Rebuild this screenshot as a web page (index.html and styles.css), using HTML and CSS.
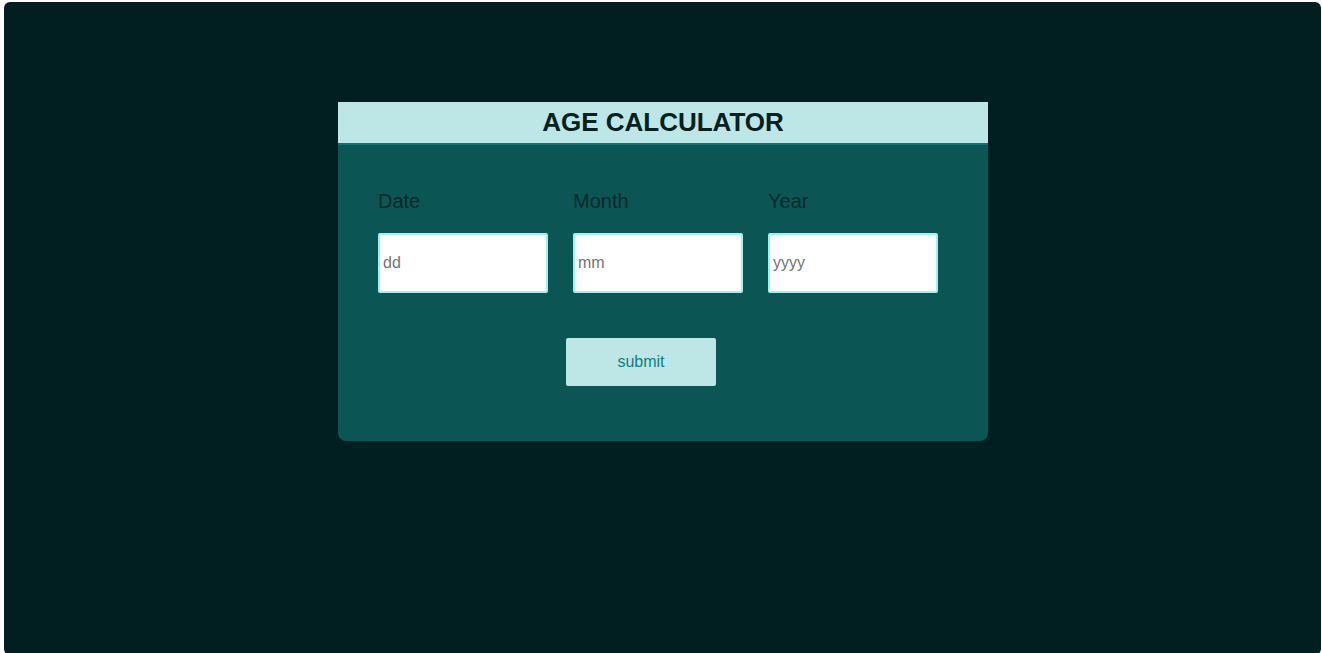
FILE: index.html
```html
<!DOCTYPE html>
<html lang="en">
<head>
<meta charset="utf-8">
<title>Age Calculator</title>
<link rel="stylesheet" href="styles.css">
</head>
<body>
<main class="screen">
  <section class="card">
    <h1 class="card-title">AGE CALCULATOR</h1>
    <form class="card-body">
      <div class="fields">
        <label class="field">
          <span class="field-label">Date</span>
          <input class="field-input" type="text" placeholder="dd">
        </label>
        <label class="field">
          <span class="field-label">Month</span>
          <input class="field-input" type="text" placeholder="mm">
        </label>
        <label class="field">
          <span class="field-label">Year</span>
          <input class="field-input" type="text" placeholder="yyyy">
        </label>
      </div>
      <button class="submit" type="button">submit</button>
    </form>
  </section>
</main>
</body>
</html>
```

FILE: styles.css
```css
html, body {
  margin: 0;
  padding: 0;
  background: #ffffff;
}

body {
  font-family: "Liberation Sans", Arial, sans-serif;
  overflow: hidden;
}

.screen {
  margin: 2px 1px 0 4px;
  height: 653px;
  background: #011f20;
  border-radius: 6px;
  padding-top: 100px;
  box-sizing: border-box;
}

.card {
  width: 650px;
  margin-left: 334px;
  background: #0b5555;
  border-radius: 0 0 8px 8px;
}

.card-title {
  margin: 0;
  height: 41px;
  line-height: 41px;
  background: #bde6e6;
  border-bottom: 2px solid #0a7471;
  color: #022222;
  font-size: 26px;
  font-weight: bold;
  text-align: center;
}

.card-body {
  margin: 0;
  padding: 45px 0 55px 40px;
}

.fields {
  display: flex;
  gap: 25px;
}

.field {
  display: flex;
  flex-direction: column;
  gap: 20px;
  width: 170px;
}

.field-label {
  font-size: 20px;
  line-height: 23px;
  color: #062a2a;
}

.field-input {
  box-sizing: border-box;
  width: 170px;
  height: 60px;
  margin: 0;
  padding: 1px 3px;
  border: 2px solid #a0f2ee;
  border-radius: 2px;
  background: #ffffff;
  font-family: "Liberation Sans", Arial, sans-serif;
  font-size: 16px;
  color: #222;
  outline: none;
}

.field-input::placeholder {
  color: #757575;
}

.submit {
  display: block;
  margin: 45px 0 0 188px;
  width: 150px;
  height: 48px;
  border: none;
  border-radius: 2px;
  background: #bde6e6;
  color: #0d7f7f;
  font-family: "Liberation Sans", Arial, sans-serif;
  font-size: 16px;
  cursor: pointer;
}
```
